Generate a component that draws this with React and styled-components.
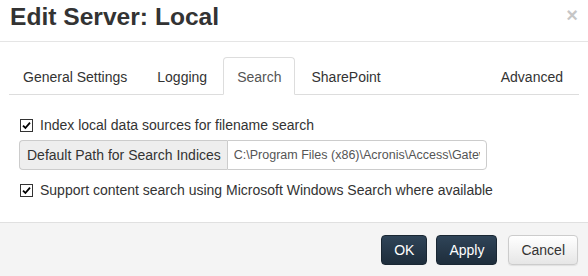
import React, { useState } from 'react'
import { styled, createGlobalStyle } from 'styled-components'

const GlobalStyle = createGlobalStyle`
  html, body {
    margin: 0;
    padding: 0;
    background: #ffffff;
  }
  body {
    font-family: "Liberation Sans", Arial, sans-serif;
    font-size: 14px;
    color: #333;
  }
`

const Dialog = styled.div`
  width: 588px;
  height: 276px;
  display: flex;
  flex-direction: column;
  background: #fff;
  overflow: hidden;
`

const Header = styled.div`
  height: 42px;
  border-bottom: 1px solid #e5e5e5;
  display: flex;
  align-items: flex-start;
  justify-content: space-between;
  box-sizing: border-box;
  padding: 0 10px 0 10px;
`

const Title = styled.h4`
  margin: 0;
  padding-top: 2px;
  font-size: 24.6px;
  font-weight: bold;
  line-height: 30px;
  color: #333;
`

const Close = styled.button`
  border: 0;
  background: none;
  padding: 0;
  margin-top: 5px;
  font-family: "Liberation Sans", Arial, sans-serif;
  font-size: 20px;
  font-weight: bold;
  line-height: 20px;
  color: #000;
  opacity: 0.22;
  cursor: pointer;
`

const Body = styled.div`
  flex: 1;
  padding: 15px 9px 0 9px;
`

const TabList = styled.ul`
  list-style: none;
  margin: 0;
  padding: 0;
  display: flex;
  border-bottom: 1px solid #ddd;
  height: 37px;
`

const Tab = styled.li`
  margin-right: 2px;
  margin-bottom: -1px;
  margin-left: ${(p) => (p.$right ? 'auto' : '0')};
  padding: 9px 13px 7px 13px;
  line-height: 20px;
  border: 1px solid ${(p) => (p.$active ? '#ddd' : 'transparent')};
  border-bottom-color: ${(p) => (p.$active ? '#fff' : 'transparent')};
  border-radius: 4px 4px 0 0;
  background: ${(p) => (p.$active ? '#fff' : 'transparent')};
  color: ${(p) => (p.$active ? '#555' : '#333')};
  cursor: pointer;
`

const Pane = styled.div`
  padding: 20px 10px 0 11px;
`

const CheckRow = styled.label`
  display: flex;
  align-items: center;
  gap: 7px;
  line-height: 20px;
  cursor: pointer;
`

const Box = styled.span`
  width: 11px;
  height: 11px;
  border: 1px solid #333;
  background: #fff;
  display: flex;
  align-items: center;
  justify-content: center;
  flex-shrink: 0;
`

const InputGroup = styled.div`
  display: flex;
  width: 468px;
  height: 30px;
  margin: 5px 0 10px -1px;
`

const Addon = styled.span`
  display: flex;
  align-items: center;
  padding: 0 6px 0 7px;
  background: #eee;
  border: 1px solid #ccc;
  border-right: 0;
  border-radius: 4px 0 0 4px;
  color: #333;
  white-space: nowrap;
`

const PathInput = styled.input`
  flex: 1;
  min-width: 0;
  border: 1px solid #ccc;
  border-radius: 0 4px 4px 0;
  padding: 0 6px;
  font-family: "Liberation Sans", Arial, sans-serif;
  font-size: 12.5px;
  color: #555;
  outline: none;
`

const Footer = styled.div`
  height: 54px;
  box-sizing: border-box;
  border-top: 1px solid #e0e0e0;
  background: #f4f4f4;
  display: flex;
  align-items: center;
  justify-content: flex-end;
  gap: 9px;
  padding: 0 10px 0 0;
`

const Button = styled.button`
  height: 30px;
  padding: 0 12px;
  border-radius: 4px;
  font-family: "Liberation Sans", Arial, sans-serif;
  font-size: 14px;
  cursor: pointer;
  border: 1px solid ${(p) => (p.$primary ? '#1a2733' : '#ccc')};
  color: ${(p) => (p.$primary ? '#fff' : '#333')};
  background: ${(p) =>
    p.$primary
      ? 'linear-gradient(to bottom, #2f4458 0%, #1e2d3b 100%)'
      : 'linear-gradient(to bottom, #ffffff 0%, #e6e6e6 100%)'};
  box-shadow: ${(p) => (p.$primary ? 'none' : '0 1px 1px rgba(0,0,0,0.08)')};
`

const CancelButton = styled(Button)`
  margin-left: 2px;
`

function Checkbox({ checked, onToggle, children }) {
  return (
    <CheckRow onClick={onToggle}>
      <Box>
        {checked ? (
          <svg width="9" height="9" viewBox="0 0 9 9">
            <path d="M1 4.6 L3.4 7 L8 1.6" fill="none" stroke="#000" strokeWidth="1.8" />
          </svg>
        ) : null}
      </Box>
      {children}
    </CheckRow>
  )
}

const tabs = ['General Settings', 'Logging', 'Search', 'SharePoint']

export default function App() {
  const [active, setActive] = useState('Search')
  const [indexLocal, setIndexLocal] = useState(true)
  const [contentSearch, setContentSearch] = useState(true)

  return (
    <>
      <GlobalStyle />
      <Dialog>
        <Header>
          <Title>Edit Server: Local</Title>
          <Close>×</Close>
        </Header>
        <Body>
          <TabList>
            {tabs.map((t) => (
              <Tab key={t} $active={active === t} onClick={() => setActive(t)}>
                {t}
              </Tab>
            ))}
            <Tab $right $active={active === 'Advanced'} onClick={() => setActive('Advanced')}>
              Advanced
            </Tab>
          </TabList>
          <Pane>
            <Checkbox checked={indexLocal} onToggle={() => setIndexLocal(!indexLocal)}>
              Index local data sources for filename search
            </Checkbox>
            <InputGroup>
              <Addon>Default Path for Search Indices</Addon>
              <PathInput defaultValue="C:\Program Files (x86)\Acronis\Access\Gateway Server\SearchIndices" />
            </InputGroup>
            <Checkbox checked={contentSearch} onToggle={() => setContentSearch(!contentSearch)}>
              Support content search using Microsoft Windows Search where available
            </Checkbox>
          </Pane>
        </Body>
        <Footer>
          <Button $primary>OK</Button>
          <Button $primary>Apply</Button>
          <CancelButton>Cancel</CancelButton>
        </Footer>
      </Dialog>
    </>
  )
}
